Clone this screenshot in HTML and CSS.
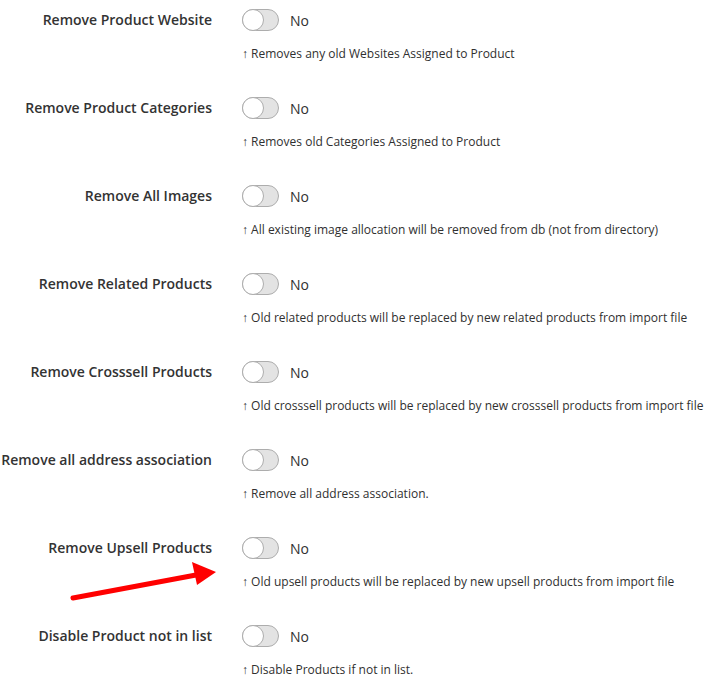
FILE: index.html
```html
<!DOCTYPE html>
<html lang="en">
<head>
    <title>Import Options</title>
    <meta charset="utf-8">
    <link rel="stylesheet" href="styles.css">
</head>
<body>
    <div class="fieldset">
        <div class="field">
            <label class="field-label">Remove Product Website</label>
            <div class="field-control">
                <div class="switcher"><span class="switcher-track"></span><span class="switcher-text">No</span></div>
                <div class="note">&uarr; Removes any old Websites Assigned to Product</div>
            </div>
        </div>
        <div class="field">
            <label class="field-label">Remove Product Categories</label>
            <div class="field-control">
                <div class="switcher"><span class="switcher-track"></span><span class="switcher-text">No</span></div>
                <div class="note">&uarr; Removes old Categories Assigned to Product</div>
            </div>
        </div>
        <div class="field">
            <label class="field-label">Remove All Images</label>
            <div class="field-control">
                <div class="switcher"><span class="switcher-track"></span><span class="switcher-text">No</span></div>
                <div class="note">&uarr; All existing image allocation will be removed from db (not from directory)</div>
            </div>
        </div>
        <div class="field">
            <label class="field-label">Remove Related Products</label>
            <div class="field-control">
                <div class="switcher"><span class="switcher-track"></span><span class="switcher-text">No</span></div>
                <div class="note">&uarr; Old related products will be replaced by new related products from import file</div>
            </div>
        </div>
        <div class="field">
            <label class="field-label">Remove Crosssell Products</label>
            <div class="field-control">
                <div class="switcher"><span class="switcher-track"></span><span class="switcher-text">No</span></div>
                <div class="note">&uarr; Old crosssell products will be replaced by new crosssell products from import file</div>
            </div>
        </div>
        <div class="field">
            <label class="field-label">Remove all address association</label>
            <div class="field-control">
                <div class="switcher"><span class="switcher-track"></span><span class="switcher-text">No</span></div>
                <div class="note">&uarr; Remove all address association.</div>
            </div>
        </div>
        <div class="field">
            <label class="field-label">Remove Upsell Products</label>
            <div class="field-control">
                <div class="switcher"><span class="switcher-track"></span><span class="switcher-text">No</span></div>
                <div class="note">&uarr; Old upsell products will be replaced by new upsell products from import file</div>
            </div>
        </div>
        <div class="field">
            <label class="field-label">Disable Product not in list</label>
            <div class="field-control">
                <div class="switcher"><span class="switcher-track"></span><span class="switcher-text">No</span></div>
                <div class="note">&uarr; Disable Products if not in list.</div>
            </div>
        </div>
    </div>

    <!-- red pointer arrow drawn over the form -->
    <svg class="pointer" width="712" height="684" viewBox="0 0 712 684">
        <line x1="73" y1="598" x2="196" y2="575" stroke="#f00" stroke-width="5" stroke-linecap="round"/>
        <polygon points="216,572 192,562 197,585" fill="#f00"/>
    </svg>
</body>
</html>
```

FILE: styles.css
```css
body {
    margin: 0;
    background: #fff;
    font-family: "Open Sans", "Liberation Sans", sans-serif;
    color: #303030;
}

.fieldset {
    display: flex;
    flex-direction: column;
}

.field {
    display: flex;
    height: 88px;
    padding-top: 9px;
    box-sizing: border-box;
}

.field-label {
    width: 212px;
    flex-shrink: 0;
    text-align: right;
    font-size: 14px;
    font-weight: 600;
    line-height: 22px;
    color: #333;
    white-space: nowrap;
}

.field-control {
    margin-left: 30px;
}

.switcher {
    display: flex;
    align-items: center;
    height: 22px;
}

.switcher-track {
    position: relative;
    width: 37px;
    height: 22px;
    box-sizing: border-box;
    border: 1px solid #adadad;
    border-radius: 12px;
    background: #e3e3e3;
}

.switcher-track::before {
    content: "";
    position: absolute;
    left: -1px;
    top: -1px;
    width: 22px;
    height: 22px;
    box-sizing: border-box;
    border: 1px solid #adadad;
    border-radius: 50%;
    background: #fff;
}

.switcher-text {
    margin-left: 11px;
    font-size: 14px;
    color: #303030;
}

.note {
    margin-top: 15px;
    font-size: 12px;
    line-height: 16px;
    color: #303030;
    white-space: nowrap;
}

.pointer {
    position: absolute;
    left: 0;
    top: 0;
    pointer-events: none;
}
```
